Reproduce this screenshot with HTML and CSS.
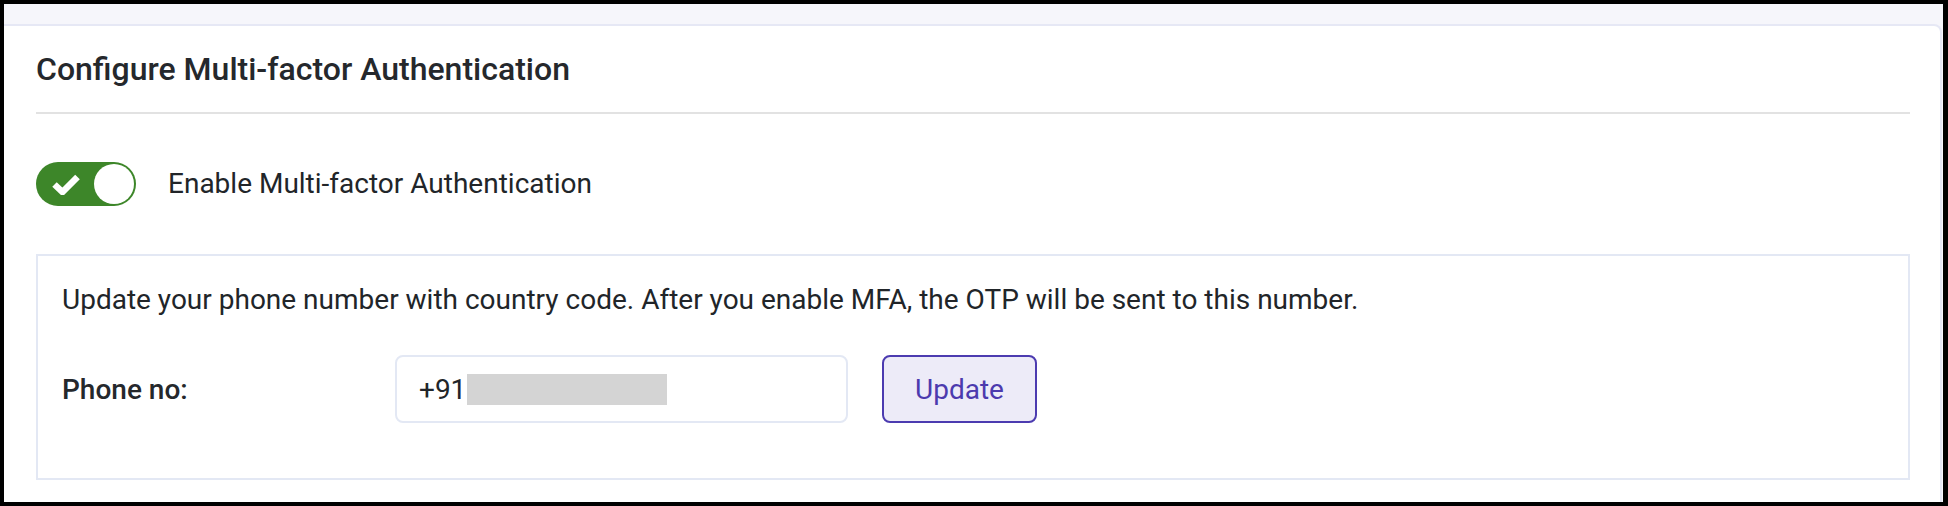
FILE: index.html
```html
<!DOCTYPE html>
<html lang="en">
<head>
    <meta charset="UTF-8">
    <meta name="viewport" content="width=device-width, initial-scale=1.0">
    <title>Configure Multi-factor Authentication</title>
    <link rel="stylesheet" href="styles.css">
</head>
<body>
    <div class="frame">
        <div class="card">
            <div class="card-header">
                <h2>Configure Multi-factor Authentication</h2>
            </div>

            <div class="mfa-toggle">
                <div class="switch on">
                    <svg class="switch-check" width="28" height="21" viewBox="0 0 28 21">
                        <polyline points="2.5,10.5 10.5,18 25.5,3" fill="none" stroke="#fff" stroke-width="6.5" stroke-linejoin="miter"/>
                    </svg>
                    <span class="switch-knob"></span>
                </div>
                <span class="toggle-label">Enable Multi-factor Authentication</span>
            </div>

            <div class="phone-box">
                <p class="hint">Update your phone number with country code. After you enable MFA, the OTP will be sent to this number.</p>
                <div class="phone-row">
                    <label class="phone-label">Phone no:</label>
                    <div class="phone-field">+91<span class="redacted"></span></div>
                    <button class="btn-update">Update</button>
                </div>
            </div>
        </div>
    </div>
</body>
</html>
```

FILE: styles.css
```css
* {
    margin: 0;
    padding: 0;
    box-sizing: border-box;
}

body {
    font-family: Roboto, "Liberation Sans", Arial, sans-serif;
    color: #212529;
    background-color: #fff;
}

.frame {
    height: 506px;
    border: 4px solid #000;
    border-right-width: 5px;
    background-color: #f6f6fb;
    padding-top: 20px;
    padding-right: 1px;
    overflow: hidden;
}

.card {
    height: 520px;
    background-color: #fff;
    border: 2px solid #e6e8f5;
    border-left: none;
    border-radius: 0 8px 0 0;
    padding: 23px 30px 0 32px;
}

.card-header {
    padding-bottom: 23px;
    border-bottom: 2px solid #e2e2e2;
}

.card-header h2 {
    font-size: 32px;
    font-weight: 500;
    line-height: 40px;
    color: #25282c;
}

.mfa-toggle {
    display: flex;
    align-items: center;
    gap: 32px;
    margin-top: 48px;
}

.switch {
    width: 100px;
    height: 44px;
    border-radius: 22px;
    background-color: #3d8629;
    padding: 2px;
    display: flex;
    align-items: center;
    justify-content: space-between;
}

.switch-check {
    margin-left: 14px;
}

.switch-knob {
    width: 40px;
    height: 40px;
    border-radius: 50%;
    background-color: #fff;
}

.toggle-label {
    font-size: 28px;
    line-height: 44px;
}

.phone-box {
    margin-top: 48px;
    border: 2px solid #e3e8f4;
    padding: 24px 24px 55px;
}

.hint {
    font-size: 28px;
    line-height: 40px;
}

.phone-row {
    display: flex;
    align-items: center;
    margin-top: 35px;
}

.phone-label {
    width: 333px;
    font-size: 28px;
    font-weight: 500;
    color: #25282c;
}

.phone-field {
    width: 453px;
    height: 68px;
    border: 2px solid #e3e8f4;
    border-radius: 8px;
    padding-left: 22px;
    display: flex;
    align-items: center;
    font-size: 28px;
}

.redacted {
    display: inline-block;
    width: 200px;
    height: 31px;
    margin-left: 1px;
    background-color: #d4d4d4;
}

.btn-update {
    margin-left: 34px;
    width: 155px;
    height: 68px;
    border: 2px solid #4c3bb0;
    border-radius: 8px;
    background-color: #edebf8;
    color: #4c3aae;
    font-family: inherit;
    font-size: 28px;
    cursor: pointer;
}
```
